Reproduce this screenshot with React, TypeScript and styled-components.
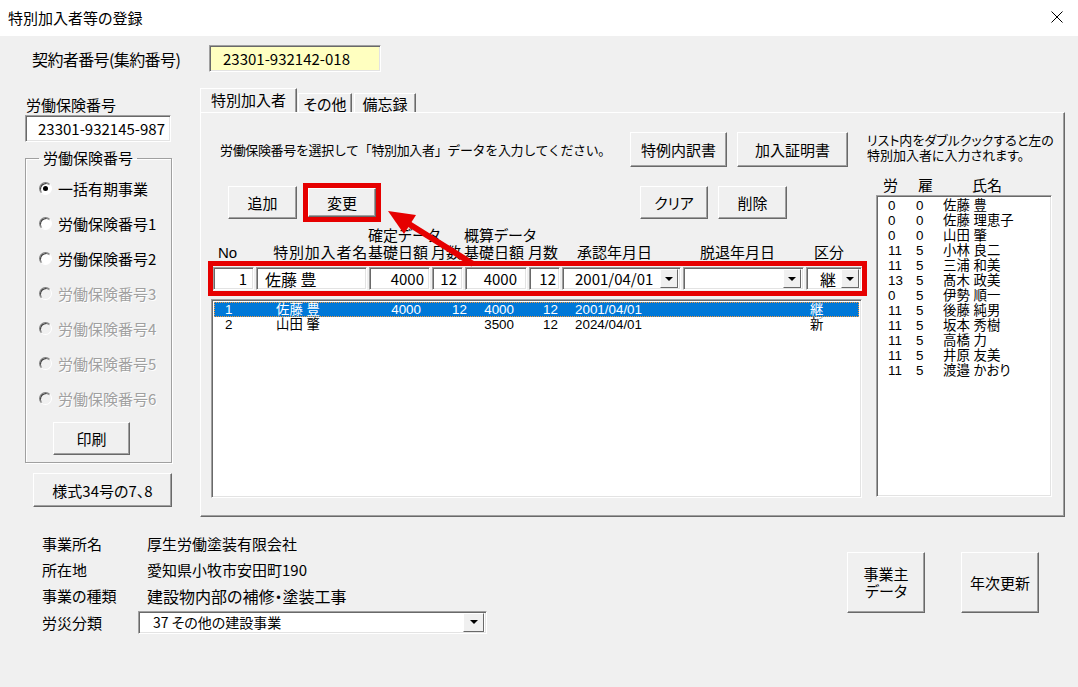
import styled, { createGlobalStyle } from "styled-components";

const GlobalStyle = createGlobalStyle`
  html, body {
    margin: 0;
    padding: 0;
  }
  body {
    width: 1078px;
    height: 687px;
    overflow: hidden;
    background: #f0f0f0;
    color: #000;
    font-family: "Noto Sans CJK JP", "Noto Sans", sans-serif;
    font-feature-settings: "palt";
  }
`;

type Member = {
  no: string;
  name: string;
  k1: string;
  m1: string;
  k2: string;
  m2: string;
  date: string;
  kubun: string;
  selected?: boolean;
};

const members: Member[] = [
  { no: "1", name: "佐藤 豊", k1: "4000", m1: "12", k2: "4000", m2: "12", date: "2001/04/01", kubun: "継", selected: true },
  { no: "2", name: "山田 肇", k1: "", m1: "", k2: "3500", m2: "12", date: "2024/04/01", kubun: "新" },
];

const workers = [
  ["0", "0", "佐藤 豊"],
  ["0", "0", "佐藤 理恵子"],
  ["0", "0", "山田 肇"],
  ["11", "5", "小林 良二"],
  ["11", "5", "三浦 和美"],
  ["13", "5", "髙木 政美"],
  ["0", "5", "伊勢 順一"],
  ["11", "5", "後藤 純男"],
  ["11", "5", "坂本 秀樹"],
  ["11", "5", "高橋 力"],
  ["11", "5", "井原 友美"],
  ["11", "5", "渡邉 かおり"],
];

const radios = [
  { label: "一括有期事業", checked: true },
  { label: "労働保険番号1" },
  { label: "労働保険番号2" },
  { label: "労働保険番号3", disabled: true },
  { label: "労働保険番号4", disabled: true },
  { label: "労働保険番号5", disabled: true },
  { label: "労働保険番号6", disabled: true },
];

const App = () => {
  return (
    <>
      <GlobalStyle />
      <TitleBar>
        <TitleText>特別加入者等の登録</TitleText>
        <CloseIcon viewBox="0 0 12 12">
          <path d="M0.5 0.5L11.5 11.5M11.5 0.5L0.5 11.5" stroke="#000" strokeWidth="1" />
        </CloseIcon>
      </TitleBar>
      <Body>
        <ContractRow>
          <ContractLabel>契約者番号(集約番号)</ContractLabel>
          <ContractField>23301-932142-018</ContractField>
        </ContractRow>

        <MainRow>
          <SideColumn>
            <SideLabel>労働保険番号</SideLabel>
            <NumberField>23301-932145-987</NumberField>
            <GroupBox>
              <GroupLegend>労働保険番号</GroupLegend>
              {radios.map((r) => (
                <RadioRow key={r.label} $disabled={r.disabled}>
                  <RadioDot $checked={r.checked} $disabled={r.disabled} />
                  {r.label}
                </RadioRow>
              ))}
              <PrintButton>印刷</PrintButton>
            </GroupBox>
            <FormButton>様式34号の7、8</FormButton>
          </SideColumn>

          <TabArea>
            <TabStrip>
              <Tab $active $w={97}>特別加入者</Tab>
              <Tab $w={54} $gap={1}>その他</Tab>
              <Tab $w={62} $gap={2}>備忘録</Tab>
            </TabStrip>
            <Panel>
              <LeftArea>
                <ActionRow>
                  <Instruction>労働保険番号を選択して「特別加入者」データを入力してください。</Instruction>
                  <ButtonGroup $right={19}>
                    <WinButton $w={97} $h={35}>特例内訳書</WinButton>
                    <WinButton $w={111} $h={35}>加入証明書</WinButton>
                  </ButtonGroup>
                </ActionRow>
                <EditRow>
                  <AddButton $w={69} $h={33}>追加</AddButton>
                  <RedFrame>
                    <WinButton $w={68} $h={29}>変更</WinButton>
                  </RedFrame>
                  <ButtonGroup $right={80}>
                    <WinButton $w={68} $h={33}>クリア</WinButton>
                    <WinButton $w={69} $h={33}>削除</WinButton>
                  </ButtonGroup>
                </EditRow>

                <HeaderGrid>
                  <GroupHead $col={3}>確定データ</GroupHead>
                  <GroupHead $col={5}>概算データ</GroupHead>
                  <HeadCell $pl={6}>No</HeadCell>
                  <HeadCell $right>特別加入者名</HeadCell>
                  <HeadCell>基礎日額</HeadCell>
                  <HeadCell>月数</HeadCell>
                  <HeadCell>基礎日額</HeadCell>
                  <HeadCell>月数</HeadCell>
                  <HeadCell $pl={16}>承認年月日</HeadCell>
                  <HeadCell $pl={18}>脱退年月日</HeadCell>
                  <HeadCell $pl={9}>区分</HeadCell>
                </HeaderGrid>

                <InputFrame>
                  <Field $right $pr={6}>1</Field>
                  <Field $pl={8} $size={16}>佐藤 豊</Field>
                  <Field $right $pr={5}>4000</Field>
                  <Field $right $pr={5}>12</Field>
                  <Field $right $pr={9}>4000</Field>
                  <Field $right $pr={3}>12</Field>
                  <Field $pl={12}>
                    <ComboText>2001/04/01</ComboText>
                    <DropButton />
                  </Field>
                  <Field>
                    <ComboText />
                    <DropButton />
                  </Field>
                  <Field $pl={13} $last $size={16}>
                    <ComboText>継</ComboText>
                    <DropButton />
                  </Field>
                </InputFrame>

                <MemberList>
                  {members.map((m) => (
                    <MemberRow key={m.no} $selected={m.selected}>
                      <ListCell $pl={11}>{m.no}</ListCell>
                      <ListCell>{m.name}</ListCell>
                      <ListCell $right>{m.k1}</ListCell>
                      <ListCell $right>{m.m1}</ListCell>
                      <ListCell $right>{m.k2}</ListCell>
                      <ListCell $right>{m.m2}</ListCell>
                      <ListCell $pl={16}>{m.date}</ListCell>
                      <ListCell>{m.kubun}</ListCell>
                    </MemberRow>
                  ))}
                </MemberList>
              </LeftArea>

              <RightArea>
                <Note>
                  リスト内をダブルクックすると左の
                  <br />
                  特別加入者に入力されます。
                </Note>
                <WorkerHead>
                  <span>労</span>
                  <span>雇</span>
                  <span>氏名</span>
                </WorkerHead>
                <WorkerList>
                  {workers.map((w, i) => (
                    <WorkerRow key={i}>
                      <ListCell>{w[0]}</ListCell>
                      <ListCell>{w[1]}</ListCell>
                      <ListCell>{w[2]}</ListCell>
                    </WorkerRow>
                  ))}
                </WorkerList>
              </RightArea>

              <Arrow viewBox="0 0 300 170" width={300} height={170}>
                <line x1="272" y1="151" x2="208" y2="111" stroke="#e60000" strokeWidth="6" />
                <polygon points="187,98 215,102 203,121" fill="#e60000" />
              </Arrow>
            </Panel>
          </TabArea>
        </MainRow>

        <BottomRow>
          <InfoGrid>
            <InfoRow>
              <InfoLabel>事業所名</InfoLabel>
              <InfoValue>厚生労働塗装有限会社</InfoValue>
            </InfoRow>
            <InfoRow>
              <InfoLabel>所在地</InfoLabel>
              <InfoValue>愛知県小牧市安田町190</InfoValue>
            </InfoRow>
            <InfoRow $h={27}>
              <InfoLabel>事業の種類</InfoLabel>
              <InfoValue $size={16}>建設物内部の補修・塗装工事</InfoValue>
            </InfoRow>
            <InfoRow>
              <InfoLabel>労災分類</InfoLabel>
              <ClassCombo>
                <ComboText>37 その他の建設事業</ComboText>
                <DropButton $w={21} />
              </ClassCombo>
            </InfoRow>
          </InfoGrid>
          <BottomButtons>
            <TwoLineButton $w={78} $h={61}>
              事業主
              <br />
              データ
            </TwoLineButton>
            <WinButton $w={78} $h={61}>年次更新</WinButton>
          </BottomButtons>
        </BottomRow>
      </Body>
    </>
  );
};

const sunken = `
  box-sizing: border-box;
  border: 1px solid;
  border-color: #a0a0a0 #ffffff #ffffff #a0a0a0;
  box-shadow: inset 1px 1px 0 #696969, inset -1px -1px 0 #e3e3e3;
`;

const compactFont = `"Liberation Sans", "Noto Sans CJK JP", sans-serif`;

const TitleBar = styled.div`
  height: 36px;
  background: #ffffff;
  display: flex;
  align-items: center;
  justify-content: space-between;
  padding: 0 15px 2px 8px;
  box-sizing: border-box;
`;

const TitleText = styled.div`
  font-size: 15px;
`;

const CloseIcon = styled.svg`
  width: 12px;
  height: 12px;
`;

const Body = styled.div`
  height: 651px;
  padding-top: 9px;
  box-sizing: border-box;
`;

const ContractRow = styled.div`
  display: flex;
  align-items: center;
  padding-left: 32px;
  height: 27px;
`;

const ContractLabel = styled.div`
  width: 177px;
  font-size: 16px;
  font-feature-settings: normal;
  letter-spacing: -0.6px;
`;

const ContractField = styled.div`
  ${sunken}
  width: 172px;
  height: 27px;
  background: #ffffc0;
  display: flex;
  align-items: center;
  padding-left: 13px;
  font-size: 15px;
`;

const MainRow = styled.div`
  display: flex;
  margin-top: 16px;
  padding-left: 25px;
  gap: 25px;
`;

const SideColumn = styled.div`
  width: 150px;
  padding-top: 8px;
  display: flex;
  flex-direction: column;
`;

const SideLabel = styled.div`
  font-size: 15px;
  line-height: 18px;
  margin-left: 1px;
`;

const NumberField = styled.div`
  ${sunken}
  margin-top: 1px;
  width: 146px;
  height: 27px;
  background: #ffffff;
  display: flex;
  align-items: center;
  padding-left: 12px;
  font-size: 15px;
`;

const GroupBox = styled.fieldset`
  margin: 8px 0 0 0;
  width: 147px;
  box-sizing: border-box;
  padding: 5px 0 7px 0;
  border: 1px solid #a0a0a0;
  box-shadow: inset 1px 1px 0 #ffffff, 1px 1px 0 #ffffff;
  min-inline-size: 0;
`;

const GroupLegend = styled.legend`
  margin-left: 13px;
  padding: 0 4px;
  font-size: 15px;
  line-height: 16px;
`;

const RadioRow = styled.label<{ $disabled?: boolean }>`
  display: flex;
  align-items: center;
  gap: 6px;
  height: 35px;
  padding-left: 13px;
  font-size: 15px;
  color: ${(p) => (p.$disabled ? "#a0a0a0" : "#000")};
  text-shadow: ${(p) => (p.$disabled ? "1px 1px 0 #ffffff" : "none")};
`;

const RadioDot = styled.span<{ $checked?: boolean; $disabled?: boolean }>`
  width: 13px;
  height: 13px;
  box-sizing: border-box;
  border-radius: 50%;
  border: 1px solid;
  border-color: #808080 #ffffff #ffffff #808080;
  box-shadow: inset 1px 1px 0 #404040;
  background: ${(p) => (p.$disabled ? "#f0f0f0" : "#ffffff")};
  display: flex;
  align-items: center;
  justify-content: center;
  text-shadow: none;
  &::after {
    content: "";
    width: 5px;
    height: 5px;
    border-radius: 50%;
    background: #000;
    display: ${(p) => (p.$checked ? "block" : "none")};
  }
`;

const WinButton = styled.button<{ $w: number; $h: number }>`
  width: ${(p) => p.$w}px;
  height: ${(p) => p.$h}px;
  flex: none;
  padding: 0;
  box-sizing: border-box;
  background: #f0f0f0;
  border: 1px solid;
  border-color: #ffffff #696969 #696969 #ffffff;
  box-shadow: inset -1px -1px 0 #a0a0a0;
  font-family: inherit;
  font-feature-settings: "palt";
  font-size: 15px;
  line-height: 17px;
  color: #000;
`;

const TwoLineButton = styled(WinButton)`
  font-family: ${compactFont};
  line-height: 17px;
`;

const PrintButton = styled(WinButton).attrs({ $w: 77, $h: 33 })`
  margin: 6px 0 0 27px;
`;

const FormButton = styled(WinButton).attrs({ $w: 139, $h: 34 })`
  margin: 10px 0 0 8px;
`;

const AddButton = styled(WinButton)`
  margin-left: 20px;
`;

const TabArea = styled.div`
  width: 865px;
  display: flex;
  flex-direction: column;
`;

const TabStrip = styled.div`
  height: 24px;
  display: flex;
  align-items: flex-end;
`;

const Tab = styled.div<{ $active?: boolean; $w: number; $gap?: number }>`
  width: ${(p) => p.$w}px;
  height: ${(p) => (p.$active ? 24 : 19)}px;
  margin-left: ${(p) => p.$gap ?? 0}px;
  box-sizing: border-box;
  border: 1px solid;
  border-bottom: none;
  border-color: #ffffff #696969 transparent #ffffff;
  box-shadow: inset -1px 0 0 #a0a0a0;
  display: flex;
  justify-content: center;
  align-items: ${(p) => (p.$active ? "flex-start" : "center")};
  padding-top: ${(p) => (p.$active ? 2 : 0)}px;
  font-size: 15px;
  line-height: 17px;
`;

const Panel = styled.div`
  position: relative;
  width: 865px;
  height: 405px;
  box-sizing: border-box;
  display: flex;
  padding: 19px 0 0 7px;
  border: 1px solid;
  border-color: #ffffff #696969 #696969 #ffffff;
  box-shadow: inset -1px -1px 0 #a0a0a0;
`;

const LeftArea = styled.div`
  width: 659px;
  display: flex;
  flex-direction: column;
`;

const ActionRow = styled.div`
  height: 35px;
  display: flex;
  align-items: center;
`;

const Instruction = styled.div`
  margin-left: 12px;
  font-size: 13px;
  font-feature-settings: normal;
  letter-spacing: -0.35px;
  white-space: nowrap;
`;

const ButtonGroup = styled.div<{ $right: number }>`
  margin-left: auto;
  padding-right: ${(p) => p.$right}px;
  display: flex;
  gap: 10px;
`;

const EditRow = styled.div`
  margin-top: 15px;
  height: 40px;
  display: flex;
  align-items: center;
`;

const RedFrame = styled.div`
  margin-left: 6px;
  border: 5px solid #e60000;
  display: flex;
`;

const columns = "43px 113px 63px 33px 64px 33px 121px 123px 56px";

const HeaderGrid = styled.div`
  margin: 5px 0 0 5px;
  width: 649px;
  display: grid;
  grid-template-columns: ${columns};
  grid-auto-rows: 17px;
  font-family: ${compactFont};
  font-size: 15px;
  line-height: 17px;
  white-space: nowrap;
`;

const GroupHead = styled.div<{ $col: number }>`
  grid-row: 1;
  grid-column: ${(p) => p.$col} / span 2;
  margin-left: -1px;
`;

const HeadCell = styled.div<{ $pl?: number; $right?: boolean }>`
  grid-row: 2;
  padding-left: ${(p) => p.$pl ?? 0}px;
  text-align: ${(p) => (p.$right ? "right" : "left")};
  margin-left: ${(p) => (p.$right ? -20 : -1)}px;
  margin-right: ${(p) => (p.$right ? 1 : 0)}px;
  letter-spacing: ${(p) => (p.$right ? "0.8px" : "0")};
`;

const InputFrame = styled.div`
  width: 659px;
  height: 35px;
  box-sizing: border-box;
  border: 5px solid #e60000;
  display: grid;
  grid-template-columns: ${columns};
`;

const Field = styled.div<{ $right?: boolean; $pl?: number; $pr?: number; $size?: number; $last?: boolean }>`
  ${sunken}
  margin: 1px ${(p) => (p.$last ? 0 : 2)}px 0 0;
  height: 23px;
  background: #ffffff;
  display: flex;
  align-items: center;
  justify-content: ${(p) => (p.$right ? "flex-end" : "flex-start")};
  padding: 0 ${(p) => p.$pr ?? 2}px 0 ${(p) => p.$pl ?? 0}px;
  font-size: ${(p) => p.$size ?? 15}px;
  white-space: nowrap;
`;

const ComboText = styled.span`
  flex: 1;
  overflow: hidden;
`;

const DropButton = styled.span<{ $w?: number }>`
  width: ${(p) => p.$w ?? 18}px;
  height: 19px;
  flex: none;
  box-sizing: border-box;
  background: #f0f0f0;
  border: 1px solid;
  border-color: #ffffff #696969 #696969 #ffffff;
  display: flex;
  align-items: center;
  justify-content: center;
  &::after {
    content: "";
    border-left: 4px solid transparent;
    border-right: 4px solid transparent;
    border-top: 4px solid #000;
  }
`;

const MemberList = styled.div`
  ${sunken}
  margin: 3px 0 0 3px;
  width: 651px;
  height: 199px;
  background: #ffffff;
  padding: 2px 2px 0 2px;
`;

const listFont = `
  font-family: ${compactFont};
  font-size: 13.4px;
  line-height: 15px;
  white-space: nowrap;
`;

const MemberRow = styled.div<{ $selected?: boolean }>`
  ${listFont}
  display: grid;
  grid-template-columns: 62px 95px 51px 46px 47px 44px 251px 1fr;
  height: 15px;
  background: ${(p) => (p.$selected ? "#0078d7" : "transparent")};
  color: ${(p) => (p.$selected ? "#ffffff" : "#000")};
  outline: ${(p) => (p.$selected ? "1px dotted #f59a3b" : "none")};
  outline-offset: -1px;
`;

const ListCell = styled.div<{ $pl?: number; $right?: boolean }>`
  height: 15px;
  padding-left: ${(p) => p.$pl ?? 0}px;
  padding-right: ${(p) => (p.$right ? 1 : 0)}px;
  text-align: ${(p) => (p.$right ? "right" : "left")};
`;

const RightArea = styled.div`
  flex: 1;
  display: flex;
  flex-direction: column;
  padding-top: 1px;
`;

const Note = styled.div`
  font-family: ${compactFont};
  font-size: 13px;
  line-height: 15px;
  white-space: nowrap;
`;

const WorkerHead = styled.div`
  margin-top: 13px;
  padding-left: 16px;
  display: grid;
  grid-template-columns: 35px 54px 1fr;
  font-size: 15px;
  line-height: 17px;
`;

const WorkerList = styled.div`
  ${sunken}
  margin: 2px 0 0 9px;
  width: 176px;
  height: 302px;
  background: #ffffff;
  padding: 2px 0 0 11px;
`;

const WorkerRow = styled.div`
  ${listFont}
  display: grid;
  grid-template-columns: 28px 27px 1fr;
  height: 15px;
`;

const Arrow = styled.svg`
  position: absolute;
  left: 0;
  top: 0;
  pointer-events: none;
`;

const BottomRow = styled.div`
  display: flex;
`;

const InfoGrid = styled.div`
  margin: 13px 0 0 42px;
  display: flex;
  flex-direction: column;
`;

const InfoRow = styled.div<{ $h?: number }>`
  height: ${(p) => p.$h ?? 26}px;
  display: grid;
  grid-template-columns: 105px auto;
  align-items: center;
`;

const InfoLabel = styled.div`
  font-size: 15px;
`;

const InfoValue = styled.div<{ $size?: number }>`
  font-size: ${(p) => p.$size ?? 15}px;
  white-space: nowrap;
`;

const ClassCombo = styled.div`
  ${sunken}
  margin-left: -9px;
  width: 349px;
  height: 23px;
  background: #ffffff;
  display: flex;
  align-items: center;
  padding: 0 2px 0 14px;
  font-size: 14px;
`;

const BottomButtons = styled.div`
  margin: 35px 39px 0 auto;
  display: flex;
  gap: 36px;
`;

export default App;
